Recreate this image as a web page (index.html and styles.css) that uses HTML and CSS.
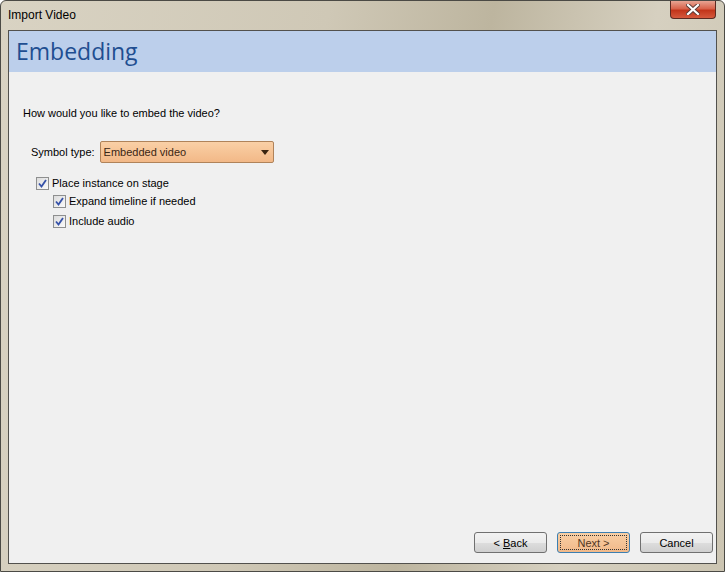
FILE: index.html
```html
<!DOCTYPE html>
<html lang="en">
  <head>
    <meta charset="UTF-8" />
    <title>Import Video</title>
    <link rel="stylesheet" href="styles.css">
  </head>
  <body>
    <div class="window">
      <div class="titlebar">
        <span class="title">Import Video</span>
        <div class="close">
          <svg width="14" height="11" viewBox="0 0 14 11">
            <path d="M2 1 L12 10 M12 1 L2 10" stroke="#5a3a35" stroke-width="4" stroke-linecap="square"/>
            <path d="M2 1 L12 10 M12 1 L2 10" stroke="#ffffff" stroke-width="2.2" stroke-linecap="square"/>
          </svg>
        </div>
      </div>
      <div class="client">
        <div class="header">Embedding</div>
        <div class="content">
          <p class="question">How would you like to embed the video?</p>
          <div class="symbol-row">
            <span class="label">Symbol type:</span>
            <div class="select">
              <span>Embedded video</span>
              <svg width="8" height="5" viewBox="0 0 8 5"><path d="M0 0 H8 L4 5 Z" fill="#3a2410"/></svg>
            </div>
          </div>
          <div class="checks">
            <label class="check"><span class="box"><svg width="9" height="9" viewBox="0 0 9 9"><path d="M1 4.5 L3.5 7.5 L8 1" fill="none" stroke="#3551a8" stroke-width="1.8"/></svg></span>Place instance on stage</label>
            <div class="sub">
              <label class="check"><span class="box"><svg width="9" height="9" viewBox="0 0 9 9"><path d="M1 4.5 L3.5 7.5 L8 1" fill="none" stroke="#3551a8" stroke-width="1.8"/></svg></span>Expand timeline if needed</label>
              <label class="check"><span class="box"><svg width="9" height="9" viewBox="0 0 9 9"><path d="M1 4.5 L3.5 7.5 L8 1" fill="none" stroke="#3551a8" stroke-width="1.8"/></svg></span>Include audio</label>
            </div>
          </div>
        </div>
        <div class="buttons">
          <button class="btn">&lt; <u>B</u>ack</button>
          <button class="btn primary">Next &gt;</button>
          <button class="btn">Cancel</button>
        </div>
      </div>
    </div>
  </body>
</html>
```

FILE: styles.css
```css
html, body {
  margin: 0;
  padding: 0;
}
body {
  width: 725px;
  height: 572px;
  font-family: "Liberation Sans", sans-serif;
  font-size: 11px;
  color: #000;
}
.window {
  box-sizing: border-box;
  width: 725px;
  height: 572px;
  border: 1px solid #4b4a45;
  border-radius: 6px 6px 0 0;
  background: linear-gradient(100deg, #d9d3c3 0%, #cfc8b6 40%, #bdb59f 60%, #d6d0c0 80%, #ccc5b2 100%);
  display: flex;
  flex-direction: column;
  padding: 0 7px 7px 7px;
}
.titlebar {
  height: 29px;
  display: flex;
  align-items: flex-start;
  justify-content: space-between;
}
.title {
  margin-top: 7px;
  font-size: 12px;
  color: #000;
}
.close {
  width: 46px;
  height: 18px;
  margin-right: 1px;
  box-sizing: border-box;
  border: 1px solid #5c2a22;
  border-top: none;
  border-radius: 0 0 4px 4px;
  background: linear-gradient(#e8a493 0%, #d9634b 45%, #c2351b 55%, #d5593d 100%);
  display: flex;
  align-items: center;
  justify-content: center;
}
.client {
  flex: 1;
  border: 1px solid #52514d;
  background: #f0f0f0;
  display: flex;
  flex-direction: column;
}
.header {
  height: 41px;
  background: #bccfeb;
  color: #1f4e91;
  font-family: "Open Sans", "DejaVu Sans", sans-serif;
  font-size: 23px;
  line-height: 40px;
  padding-left: 7px;
}
.content {
  flex: 1;
  padding: 35px 0 0 14px;
}
.question {
  margin: 0 0 22px 0;
}
.symbol-row {
  display: flex;
  align-items: center;
  padding-left: 8px;
  gap: 5px;
}
.select {
  box-sizing: border-box;
  width: 174px;
  height: 22px;
  border: 1px solid #b0835a;
  border-radius: 2px;
  background: linear-gradient(#fad0a6, #f2b887);
  color: #3b2614;
  display: flex;
  align-items: center;
  justify-content: space-between;
  padding: 0 4px 0 3px;
}
.checks {
  margin-top: 13px;
  padding-left: 13px;
  display: flex;
  flex-direction: column;
  gap: 4px;
}
.sub {
  padding-left: 17px;
  display: flex;
  flex-direction: column;
  gap: 6px;
}
.check {
  display: flex;
  align-items: center;
  gap: 3px;
  height: 14px;
}
.box {
  box-sizing: border-box;
  width: 13px;
  height: 13px;
  border: 1px solid #8e8f8f;
  background: linear-gradient(135deg, #dcdcdc, #fafafa);
  display: flex;
  align-items: center;
  justify-content: center;
}
.buttons {
  display: flex;
  justify-content: flex-end;
  gap: 10px;
  padding: 0 3px 10px 0;
}
.btn {
  width: 73px;
  height: 21px;
  border: 1px solid #707070;
  border-radius: 3px;
  background: linear-gradient(#f2f2f2 0%, #ebebeb 50%, #dddddd 51%, #cfcfcf 100%);
  font-family: "Liberation Sans", sans-serif;
  font-size: 11px;
  color: #000;
  padding: 0;
}
.btn.primary {
  border-color: #3c7fb1;
  background: linear-gradient(#f8cfa5, #f1b989);
  color: #50361f;
  outline: 1px dotted #333;
  outline-offset: -4px;
}
```
